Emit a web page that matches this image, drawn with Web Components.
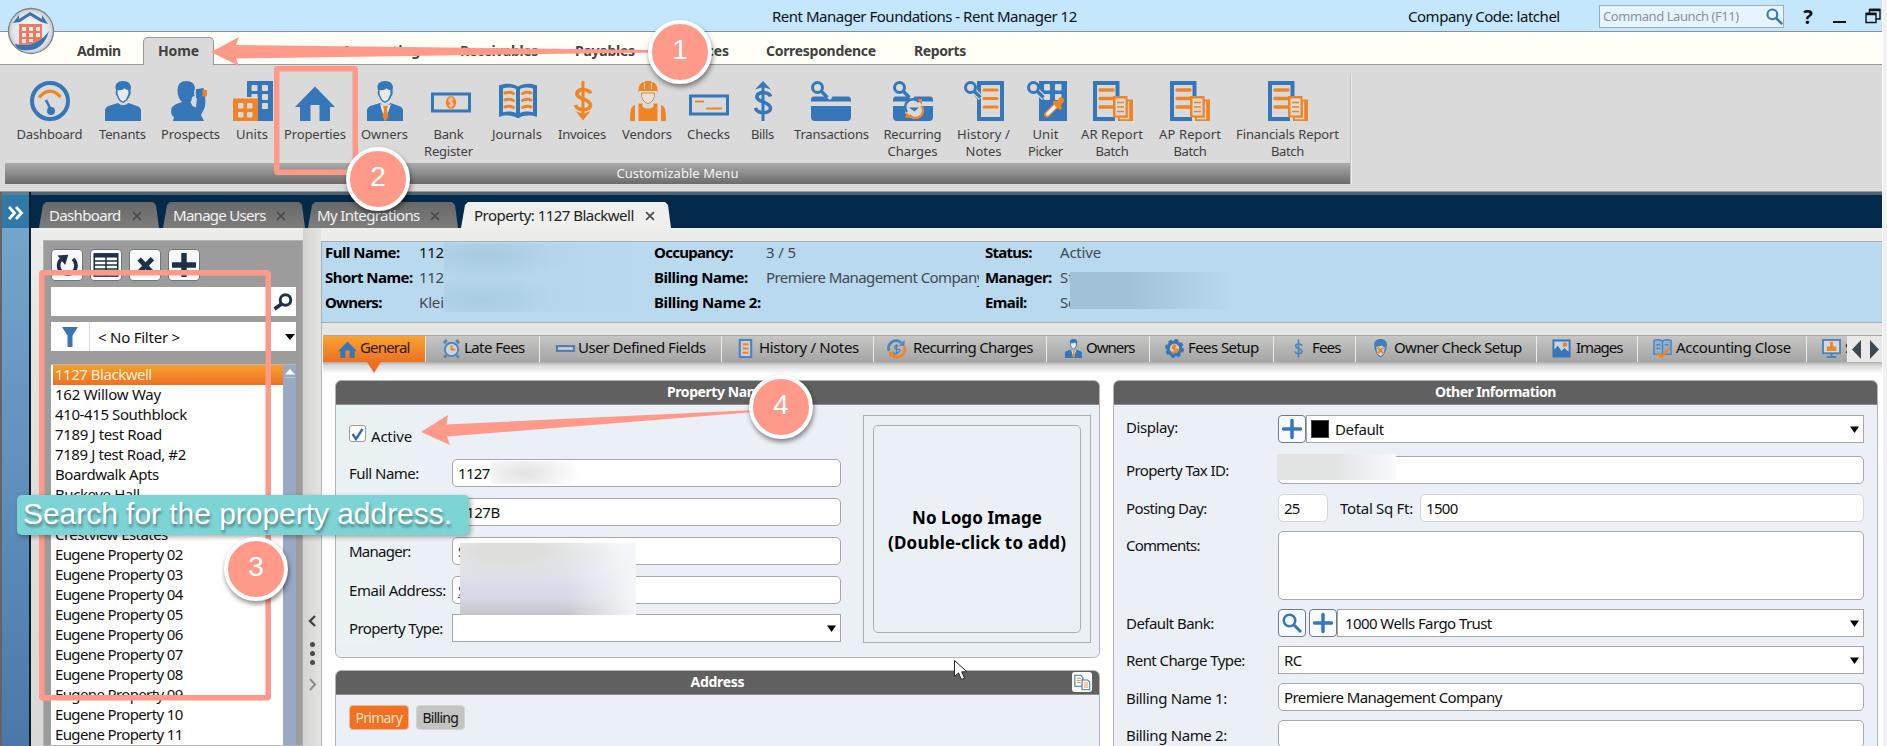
<!DOCTYPE html>
<html lang="en">
<head>
<meta charset="utf-8">
<title>Rent Manager 12</title>
<style>
html,body{margin:0;height:100%}
body{width:1887px;height:746px;overflow:hidden;background:#f1f1f1;font-family:"Noto Sans","Open Sans",sans-serif;font-size:15px;color:#111}
</style>
</head>
<body>
<rm-app></rm-app>
<script>
const define = (name, render, after) => customElements.define(name, class extends HTMLElement {
  connectedCallback() {
    if (this.shadowRoot) return;
    this.attachShadow({mode: 'open'}).innerHTML = render(this);
    if (after) after(this);
  }
});
const B = '#3577b8', O = '#f08424', G = '#dadada';

/* Text run whose tracking is adjusted to fill the width given in "w". */
define('rm-text', () => `<style>:host{display:block;white-space:nowrap;flex:none}span{display:inline-block;white-space:pre}</style><span><slot></slot></span>`, el => {
  const w = +el.getAttribute('w');
  if (!w) return;
  const s = el.shadowRoot.querySelector('span');
  const n = el.textContent.length;
  s.style.letterSpacing = ((w - s.getBoundingClientRect().width) / Math.max(1, n - .5)).toFixed(3) + 'px';
  el.style.width = w + 'px';
});
const T = (t, w, st = '') => `<rm-text w="${w}" style="${st}">${t}</rm-text>`;

const lens = c => `<circle cx="6.500" cy="6.500" r="5" fill="none" stroke="${c}" stroke-width="3"/><path d="M10 10l6.500 6.500" stroke="${c}" stroke-width="3.200"/>`;
const report = `<path d="M0 0h26.500v16h-4V4H4v32h18v4H0z" fill="${B}"/><path d="M7 9h13M7 17.500h13M7 26h13" stroke="${O}" stroke-width="3.400" stroke-linecap="round"/>
<path d="M20 15h14.500v3.500H40V40H25v-3.500h-5z" fill="${O}"/><path d="M35.500 20.500v17H27" fill="none" stroke="${G}" stroke-width="1.300"/><path d="M22.500 17.500h10v17h-10z" fill="${G}"/><path d="M24 21.500h7M24 26h7M24 30.500h7" stroke="${O}" stroke-width="1.700"/>`;
const book = `<path d="M1 4.500C7 2 14 2 20 5.500 26 2 33 2 39 4.500V36c-6-2-13-2-18 1h-2c-5-3-12-3-18-1z" fill="${B}"/><path d="M5 7.500c4-1.500 9-1.500 13 .5v24c-4-1.800-9-1.800-13-.7zM35 7.500c-4-1.500-9-1.500-13 .5v24c4-1.800 9-1.800 13-.7z" fill="${G}"/>
<g fill="none" stroke="${O}" stroke-width="3" stroke-linecap="round"><path d="M7 12q4-1.500 8.500.5M7 19q4-1.500 8.500.5M7 26q4-1.500 8.500.5M33 12q-4-1.500-8.500.5M33 19q-4-1.500-8.500.5M33 26q-4-1.500-8.500.5"/></g>`;
const head = `<path d="M13 9C11 3 15 0 20 0s9.500 3 7.500 9.500q.8 4-1 5.500Q25 20 20 22q-5-2-6-7-2-1.500-1-6z" fill="${B}"/><path d="M14.500 9q5 .8 7-1.700 1.500 2 3.800 1.700.7 4-.8 6-1 4-4.500 5.500-3.500-1.500-4.500-5.500-1.400-2-1-6z" fill="#e6e9ed"/>`;
const dollar = c => `<g fill="none" stroke="${c}" stroke-width="3.600"><path d="M27.500 12.500c-1-4.500-12-5.500-13.500-.5-1.500 6 13 5.500 13.500 12 .3 6-13.500 6.500-15 0"/></g>`;
const card = `<path d="M0 19q0-3.500 3-3.500h12l3 3h2l1.500-3H37q3 0 3 3.500v1.500H0zM0 25h40v11q0 4-4 4H4q-4 0-4-4z" fill="${B}"/>`;
const ICONS = {
  dashboard: `<circle cx="20" cy="20" r="18" fill="none" stroke="${B}" stroke-width="4"/><path d="M9 16.500q11-12.500 21.500-.5" fill="none" stroke="${O}" stroke-width="3.200"/><path d="M16 19l5 10" stroke="${B}" stroke-width="2.600"/><circle cx="21" cy="30" r="4" fill="${B}"/>`,
  tenant: head + `<path d="M2 40V29q1-4 5-4.500L15 22q5 4.500 10.500 0l7 2.500q5 1 5.500 4.500v11z" fill="${B}"/>`,
  owner: head + `<path d="M2 40V29q1-4 5-4.500L15 22l5 4.500L25.500 22l7 2.500q5 1 5.500 4.500v11z" fill="${B}"/><path d="M15 23l5 17 6-17-5.500 2.500z" fill="#e6e9ed"/><path d="M18 25h5l-1 4 1.500 7-3 4-3-4L19 29z" fill="${O}"/>`,
  prospect: `<path d="M6.500 9Q6.500 0 15.500 0 23 0 24 7l-1 4 .5 4-2.500 1-.5 3.500-1 1.500 2 4 3.500 1.500 1-10.500-1.500-4 2-4 6-1 1.500 8q1 8-.5 12l-3.500 7 3 6H2l1-4q-4-2-2.500-9Q3 23 11 21q-4.500-4-4.500-12z" fill="${B}"/><path d="M31 9h5v6.500h-5z" fill="${O}"/><path d="M25 8h6.500v9H25z" fill="${B}"/>`,
  units: `<path d="M14 0h26v40H25V16H14z" fill="${B}"/><g fill="${G}"><rect x="18.500" y="4" width="6" height="6" rx="1"/><rect x="29" y="4" width="6" height="6" rx="1"/><rect x="29" y="13" width="6" height="6" rx="1"/><rect x="29" y="22" width="6" height="6" rx="1"/><rect x="18.500" y="13" width="6" height="4"/></g><path d="M0 17.500h25V40H0z" fill="${O}"/><g fill="${G}"><rect x="5" y="22" width="5.500" height="5.500" rx="1"/><rect x="14" y="22" width="5.500" height="5.500" rx="1"/><rect x="5" y="31" width="5.500" height="5.500" rx="1"/><rect x="14" y="31" width="5.500" height="5.500" rx="1"/></g>`,
  house: `<path d="M20 5.500L40 26h-5v14H24.500V24h-9v16H5V26H0z" fill="${B}"/>`,
  bank: `<rect x="1.500" y="13" width="37" height="17" fill="none" stroke="${B}" stroke-width="3"/><ellipse cx="20" cy="21.500" rx="5.200" ry="6.500" fill="${O}"/><path d="M22 19q-2-2-3.800-.8-1 2 1.800 3t1.700 3Q19.500 25.500 18 24M20 16v11" stroke="${G}" fill="none" stroke-width="1.200"/>`,
  book,
  invoice: dollar(O) + `<path d="M20 0v33" stroke="${O}" stroke-width="3"/><path d="M12.500 30l7.500 3 7.500-3-7.500 9.500z" fill="${O}"/>`,
  bill: `<g transform="translate(0 3)">${dollar(B)}</g><path d="M20 6v34" stroke="${B}" stroke-width="3"/><path d="M12 8.500L20 0l8 8.500-8-2.500z" fill="${B}"/>`,
  vendor: `<path d="M10.500 9Q11 1 17 1V0h6v1q6 0 6.500 8l.5 2H10z" fill="${O}"/><path d="M16.500 2v6M23.500 2v6M11 10.500h18" stroke="${G}" stroke-width="1"/><path d="M13.500 12h13q.5 8-6.500 11-7-3-6.500-11z" fill="#e2e2e2" stroke="${O}" stroke-width="1"/><path d="M2 40q0-12 2-14 1-1.500 3-2v16zM38 40q0-12-2-14-1-1.500-3-2v16zM10.500 22.500h4V26q5.500 3 11 0v-3.500h4V40h-19z" fill="${O}"/>`,
  check: `<rect x="1.500" y="15" width="37" height="18" fill="none" stroke="${B}" stroke-width="3"/><path d="M6 20.500h9M17 27.500h16" stroke="${O}" stroke-width="2.200"/>`,
  trans: card + lens(B),
  recurring: card + lens(B) + `<circle cx="21" cy="28" r="9.500" fill="${G}"/><path d="M14 31a7.500 7.500 0 0112-10" fill="none" stroke="${B}" stroke-width="2.400"/><path d="M28.500 25a7.500 7.500 0 01-12 9" fill="none" stroke="${O}" stroke-width="2.400"/><path d="M16 26.500h10l-4.500 4z" fill="${B}"/><path d="M24 18h5v6zM18 37l-6-.5 2-5z" fill="${O}"/>`,
  history: `<path d="M13 0h27v40H13V18l-3-4 3-2z" fill="${B}"/><path d="M17 4h19v32H17z" fill="${G}"/><path d="M20 9h13M20 17.500h13M20 26h13" stroke="${O}" stroke-width="3.200" stroke-linecap="round"/><path d="M10 10l7 7" stroke="${G}" stroke-width="6"/>` + lens(B),
  picker: `<path d="M12 0h28v40H12z" fill="${B}"/><g fill="${G}"><rect x="17" y="3" width="6" height="6.500" rx="1"/><rect x="28" y="3" width="6.500" height="6.500" rx="1"/><rect x="17" y="13" width="6" height="6" rx="1"/><rect x="28" y="13" width="6.500" height="6" rx="1"/></g><path d="M10 10l7 7" stroke="${G}" stroke-width="6"/>${lens(B)}<path d="M20 33.500L29 24.500" stroke="${O}" stroke-width="6" stroke-linecap="round"/><path d="M20.500 33L28.500 25" stroke="#eee" stroke-width="3.500" stroke-linecap="round"/><path d="M28 21.500l5 5" stroke="${O}" stroke-width="4" stroke-linecap="round"/><path d="M31 23.500l3-4" stroke="${O}" stroke-width="6" stroke-linecap="round"/>`,
  report,
  clock: `<circle cx="20" cy="22" r="14" fill="#cdd4da" stroke="#4a86bf" stroke-width="4"/><path d="M4 9l6-7M36 9l-6-7M9 34l-4 5M31 34l4 5" stroke="#4a86bf" stroke-width="6"/><path d="M20 13v9h8" stroke="${O}" stroke-width="4" fill="none"/>`,
  field: `<rect x="2" y="15" width="36" height="10" fill="#cfcfcf" stroke="#4a7fb0" stroke-width="4.500"/>`,
  note: `<rect x="8" y="2" width="24" height="36" fill="#cfcfcf" stroke="#4a86bf" stroke-width="4.500"/><path d="M14 11h12M14 20h12M14 29h12" stroke="${O}" stroke-width="4.500"/>`,
  cycle: `<path d="M4 25A16 16 0 0130 8" fill="none" stroke="#4a86bf" stroke-width="6"/><path d="M36 15A16 16 0 0110 33" fill="none" stroke="${O}" stroke-width="6"/><path d="M15 27H4l2 12z" fill="${O}"/><path d="M25 14h12V2z" fill="#4a86bf"/><path d="M24 15q-8-3-8 2t8 5-1 7-8-2M20 11v19" fill="none" stroke="#4a7fb0" stroke-width="2.500"/>`,
  gear: `<circle cx="20" cy="20" r="13.500" fill="#d8cfc4" stroke="#3577b8" stroke-width="7"/><circle cx="20" cy="20" r="18" fill="none" stroke="#3577b8" stroke-width="4" stroke-dasharray="8 6.100"/><path d="M24 15q-8-3-8 2t8 5-1 5-8-1M20 10v20" fill="none" stroke="${O}" stroke-width="3.500"/>`,
  dollar: `<g transform="translate(0 2)">${dollar('#4a86bf')}</g><path d="M20 1v38" stroke="#4a86bf" stroke-width="3.500"/>`,
  face: `<path d="M7 16C5 5 12 0 20 0s16 5 13 17q0 6-3 10-4 10-10 12-6-2-10-12-3-5-3-11z" fill="#3f7fbd"/><path d="M11 17l12-3 6 4-2 12-7 7-7-7z" fill="#d4d0ca"/><path d="M14 18l12 12M26 18L14 30" stroke="${O}" stroke-width="4"/>`,
  image: `<rect x="1" y="1" width="38" height="38" fill="#3577b8"/><path d="M5 5h30v22l-9-8-6 6-8-11-7 8z" fill="#c8d4df"/><circle cx="27" cy="12" r="5" fill="${O}"/>`,
  ledger: `<path d="M2 3q9-3 18 1 9-4 18-1v29H2z" fill="#8fb0cf" stroke="#4a86bf" stroke-width="3"/><path d="M20 4v28M7 12h8M7 20h8M25 12h8" stroke="#4a86bf" stroke-width="3"/><path d="M10 29l8 8 16-18" fill="none" stroke="${O}" stroke-width="5.500"/>`,
  monitor: `<rect x="2" y="2" width="36" height="28" fill="#d5d8da" stroke="#4a86bf" stroke-width="4"/><path d="M20 30v8M10 38h20" stroke="#4a86bf" stroke-width="4.500"/><path d="M17 6h6v10h7v9H10v-9h7z" fill="${O}"/>`,
  search: `<circle cx="15" cy="15" r="11.500" fill="none" stroke="#3577b8" stroke-width="5"/><path d="M23 23l15 15" stroke="#3577b8" stroke-width="6"/>`,
  plus: `<path d="M20 3v34M3 20h34" stroke="#3577b8" stroke-width="7" stroke-linecap="round"/>`,
  refresh: `<path d="M30 10a14.500 14.500 0 11-20 1" fill="none" stroke="#1d3247" stroke-width="6"/><path d="M4 4l18-1-5 17z" fill="#1d3247"/>`,
  table: `<rect x="2" y="3" width="36" height="34" fill="#fff" stroke="#1d3247" stroke-width="2.500"/><path d="M2 5.500h36" stroke="#1d3247" stroke-width="6"/><path d="M2 14h36M2 20h36M2 26h36M2 32h36M20 5v32" stroke="#1d3247" stroke-width="2.300"/>`,
  cross: `<path d="M9 9l23 24M32 8L8 33" stroke="#1d3247" stroke-width="8.500"/>`,
  add: `<path d="M20 0v40M0 20h40" stroke="#1d3247" stroke-width="9"/>`,
  copy: `<path d="M2 3h14l5 5v21H2z" fill="#fff" stroke="#3577b8" stroke-width="2.500"/><path d="M6 10h10M6 15h10M6 20h10" stroke="${O}" stroke-width="2"/><path d="M19 14h13l5 5v18H19z" fill="#fff" stroke="#3577b8" stroke-width="2.500"/><path d="M23 21h10M23 26h10M23 31h10" stroke="${O}" stroke-width="2"/>`
};
define('rm-icon', el => {
  const s = el.getAttribute('s') || 40;
  return `<style>:host{display:block;flex:none;width:${s}px;height:${s}px}svg{display:block;overflow:visible}</style><svg width="${s}" height="${s}" viewBox="0 0 40 40">${ICONS[el.getAttribute('name')]}</svg>`;
});

define('rm-titlebar', () => `<style>
:host{display:flex;align-items:center;background:#c4e7fd;border-bottom:1px solid #84929c;color:#0c1016;box-sizing:border-box;height:32px;flex:none}
.find{display:flex;align-items:center;width:184px;height:21px;margin-left:39px;border:1px solid #96aebc;background:#e6f4fd;color:#8a9299;font-size:13px;box-sizing:content-box;margin-bottom:-1px}
.q{width:12px;margin-left:19px;font:bold 20px/28px "Noto Sans";margin-top:3px}
.min{width:13px;height:2px;background:#111;margin:13px 0 0 18px}
svg{margin-left:19px}
</style>${T('Rent Manager Foundations - Rent Manager 12',305,'margin-left:772px')}${T('Company Code: latchel',152,'margin-left:331px')}
<div class="find">${T('Command Launch (F11)',136,'margin:0 27px 0 3px')}<rm-icon name="search" s="17"></rm-icon></div><span class="q">?</span><div class="min"></div>
<svg width="17" height="16" fill="none" stroke="#111" stroke-width="1.400"><path d="M1 5.500h10v9H1zM4.500 5V1.500H15V11h-3.500"/><path d="M1 6h10M4.500 2H15" stroke-width="2.400"/></svg>`);

define('rm-menubar', () => {
  const items = [['Accounting',342,78],['Receivables',460,78],['Payables',575,60],['Services',672,57],['Correspondence',766,110],['Reports',914,52]];
  let x = 214, h = '';
  for (const [t, s, w] of items) { h += T(t, w, `margin-left:${s - x}px`); x = s + w; }
  return `<style>:host{display:flex;box-sizing:border-box;height:33px;border-bottom:1px solid #999;background:#fffef7;font-weight:700;font-size:14px;line-height:37px;color:#414141;flex:none}
.home{box-sizing:border-box;width:71px;height:28px;margin:5px 0 -1px 22px;padding-left:14px;border:1px solid #999;border-bottom:0;border-radius:5px 5px 0 0;background:#dadada;line-height:26px}</style>
${T('Admin',44,'margin-left:77px')}<div class="home">${T('Home',41)}</div>${h}`;
});

define('rm-ribbon', () => {
  const items = [
    [49.5,50,'dashboard',['Dashboard',66]],[122.5,123,'tenant',['Tenants',47]],[190.5,191,'prospect',['Prospects',59]],[252,253,'units',['Units',32]],
    [315,315,'house',['Properties',62]],[384.5,385,'owner',['Owners',47]],[448.5,451,'bank',['Bank',30],['Register',49]],[517,518,'book',['Journals',50]],
    [582,583,'invoice',['Invoices',48]],[647,648,'vendor',['Vendors',50]],[708.5,709,'check',['Checks',43]],[762.5,763,'bill',['Bills',23]],
    [831.5,831,'trans',['Transactions',75]],[912.5,913,'recurring',['Recurring',58],['Charges',50]],[983.5,984,'history',['History /',53],['Notes',36]],
    [1045.5,1047,'picker',['Unit',26],['Picker',35]],[1112,1113,'report',['AR Report',62],['Batch',33]],[1190,1190,'report',['AP Report',62],['Batch',33]],
    [1287.5,1288,'report',['Financials Report',103],['Batch',33]]];
  let x = 0, h = '';
  for (const [c, ic, n, ...ls] of items) {
    const w = Math.max(...ls.map(l => l[1]));
    h += `<div class="i" style="width:${w}px;margin-left:${c - w / 2 - x}px"><rm-icon name="${n}" style="margin-left:${(ic - c) * 2}px"></rm-icon>${ls.map(l => T(l[0], l[1])).join('')}</div>`;
    x = c + w / 2;
  }
  return `<style>:host{display:block;box-sizing:border-box;height:127px;background:#dadada;border-bottom:1px solid #989898;flex:none;font-size:13px;line-height:17px;color:#3f3f3f}
.items{display:flex;height:98px;box-sizing:border-box;padding-top:16px}
.i{display:flex;flex-direction:column;align-items:center;flex:none}.i rm-icon{margin-bottom:5px}
.bar{width:1345px;height:21px;margin-left:5px;background:linear-gradient(#ababab,#6b6b6b);color:#f4f4f4;display:flex;justify-content:center;line-height:20px}
.g{width:1351px;position:relative}.g::after{content:"";position:absolute;right:0;top:8px;bottom:0;width:1px;background:#c0c0c0;box-shadow:1px 0 #eee}</style><div class="g"><div class="items">${h}</div><div class="bar">${T('Customizable Menu',122)}</div></div>`;
});

define('rm-doctabs', () => {
  const x = '<svg width="10" height="10" viewBox="0 0 9 9"><path d="M1 1l7 7M8 1L1 8" stroke="currentColor" stroke-width="1.600"/></svg>';
  const tab = (t, w, tw, ml, tl, gap, cls = '') => `<div class="t ${cls}" style="width:${w}px;margin-left:${ml}px">${T(t, tw, `margin-left:${tl}px`)}<i style="margin-left:${gap}px">${x}</i></div>`;
  return `<style>:host{display:flex;align-items:flex-end;box-sizing:border-box;height:36px;background:#032a4b;border-top:3px solid #4d6375;flex:none}
.t{display:flex;align-items:center;height:26px;flex:none;color:#f2f2f2;background:linear-gradient(#686868,#7d7d7d);clip-path:polygon(0 100%,4px 3px,7px 0,calc(100% - 6px) 0,calc(100% - 3px) 3px,100% 100%)}
.t.on{background:#efefed;color:#222}i{color:#474d50;line-height:0;margin-top:2px}</style>
${tab('Dashboard',120,72,8,10,11)}${tab('Manage Users',142,93,4,10,10)}${tab('My Integrations',150,103,3,9,10)}${tab('Property: 1127 Blackwell',210,160,3,13,11,'on')}`;
});

define('rm-sidebar', () => {
  const rows = [['1127 Blackwell',97],['162 Willow Way',106],['410-415 Southblock',132],['7189 J test Road',107],['7189 J test Road, #2',131],['Boardwalk Apts',104],['Buckeye Hall',85],['Clearview Apts',98],['Crestview Estates',113]]
    .concat(['02','03','04','05','06','07','08','09','10','11'].map(n => ['Eugene Property ' + n, 128]));
  return `<style>:host{display:block;box-sizing:border-box;width:260px;height:506px;margin:12px 0 0 12px;padding:8px 8px 0 7px;background:#9c9c9c;border:1px solid #b4b4b4;border-right-color:#aaa;flex:none;overflow:hidden}
.tools{display:flex;gap:7px;margin-bottom:6px}.b{box-sizing:border-box;width:32px;height:32px;border:1px solid #6d7778;border-radius:4px;background:#f8f9fa;display:flex;align-items:center;justify-content:center;box-shadow:inset 0 0 0 1px #fff}
.box{display:flex;align-items:center;height:29px;background:#fff;margin-bottom:6px;width:245px}
.fn{width:38px;height:29px;display:flex;justify-content:center;align-items:center;border-right:1px solid #d5dbe0}
.list{display:flex;width:245px;height:390px;margin-top:13px;background:#fff;border-top:1px solid #bdb3a8}
ul{list-style:none;margin:0;padding:0 0 0 2px;flex:1}li{height:20px;line-height:19px;padding-left:2px}.on{background:linear-gradient(#f6a02e,#ee7122);color:#fdf0d5}
.sb{width:13px;background:#9aa9c3;display:flex;justify-content:center;padding-top:4px;box-sizing:border-box}</style>
<div class="tools">${[['refresh',24],['table',26],['cross',23],['add',24]].map(([n, s]) => `<div class="b"><rm-icon name="${n}" s="${s}"></rm-icon></div>`).join('')}</div>
<div class="box"><svg style="margin-left:222px" width="20" height="18" fill="none" stroke="#1d3247"><circle cx="12.500" cy="7" r="5.300" stroke-width="3"/><path d="M8.500 11L1.500 16" stroke-width="3.800"/></svg></div>
<div class="box"><div class="fn"><svg width="18" height="22" fill="#3a75b2"><path d="M1 1h16l-5.500 8.500V21h-5V9.500z"/></svg></div>${T('&lt; No Filter &gt;',82,'margin-left:8px')}<svg style="margin-left:105px" width="10" height="6"><path d="M0 0h10L5 6z"/></svg></div>
<div class="list"><ul>${rows.map(([t, w], i) => `<li class="${i ? '' : 'on'}">${T(t, w)}</li>`).join('')}</ul><div class="sb"><svg width="10" height="9"><path d="M0 5.500L5 0l5 5.500z" fill="#fff"/><path d="M0 8.500h10" stroke="#b8c3d6"/></svg></div></div>`;
});

define('rm-splitter', () => `<style>:host{display:flex;flex-direction:column;align-items:center;width:18px;flex:none;box-sizing:border-box;padding:387px 0 0;background:linear-gradient(90deg,#d4d4d3,#e3e3e2)}i{width:5px;height:5px;border-radius:50%;background:#4a4a4a;margin-bottom:4px}</style>
<svg width="9" height="12" fill="none" stroke="#444" stroke-width="2.400"><path d="M7 1L2 6l5 5"/></svg><div style="height:15px"></div><i></i><i></i><i></i><svg style="margin-top:9px" width="9" height="13" fill="none" stroke="#8d8d8d" stroke-width="2"><path d="M2 1l5 5.500L2 12"/></svg>`);

define('rm-summary', () => {
  const k = (t, w) => `<b>${T(t, w)}</b>`, v = (t, w) => `<span>${w ? T(t, w) : ''}</span>`;
  return `<style>:host{display:block;position:relative;box-sizing:border-box;height:82px;background:#b9d9ee;border:1px solid #a6b0b3;border-right:0;flex:none}
.g{display:grid;grid-template-columns:94px 235px 112px 219px 75px 300px;grid-auto-rows:25px;line-height:25px;padding-left:3px;margin-top:-2px;color:#000}
span{color:#3f4a52;overflow:hidden}.clip{width:213px}
.z{position:absolute}</style>
<div class="g">${k('Full Name:',75)}<span style="color:#111">${T('1127',33)}</span>${k('Occupancy:',79)}${v('3 / 5',30)}${k('Status:',47)}${v('Active',41)}
${k('Short Name:',88)}${v('1127',33)}${k('Billing Name:',94)}<span class="clip">${T('Premiere Management Company',218)}</span>${k('Manager:',67)}${v('St',14)}
${k('Owners:',57)}${v('Klei',25)}${k('Billing Name 2:',107)}${v('')}${k('Email:',42)}${v('Sc',15)}</div>
<div class="z" style="left:122px;top:1px;width:190px;height:69px;background:radial-gradient(ellipse 90px 24px at 42px 12px,#a8cae0,#b9d9ee00),radial-gradient(ellipse 85px 24px at 38px 56px,#aacce2,#b9d9ee00),#b5d6eb;-webkit-mask:linear-gradient(90deg,#000 40%,transparent)"></div>
<div class="z" style="left:748px;top:30px;width:165px;height:37px;background:linear-gradient(90deg,#a1c1d8 35%,#b9d9ee)"></div>`;
});

define('rm-sectiontabs', () => {
  const d = [[323,426,338,'house','General',360,50],[426,540,442,'clock','Late Fees',464,61],[540,721.5,556,'field','User Defined Fields',578,128],[721.5,874,736,'note','History / Notes',759,100],
    [874,1047,887,'cycle','Recurring Charges',913,120],[1047,1149.5,1064,'owner','Owners',1086,49],[1149.5,1274,1165,'gear','Fees Setup',1188,71],[1274,1356,1289,'dollar','Fees',1312,29],
    [1356,1537,1371,'face','Owner Check Setup',1394,128],[1537,1638,1552,'image','Images',1576,47],[1638,1806.5,1653,'ledger','Accounting Close',1676,115],[1806.5,1848,1822,'monitor','S',1845,9]];
  return `<style>:host{display:block;margin-top:12px;flex:none;background:linear-gradient(#a2a2a2,#d9d9d9 35%,#fff) 0 26px/100% 13px no-repeat;height:45px}
.r{display:flex;height:26px;border-top:1px solid #a8a8a8;background:linear-gradient(#c6c6c5,#a3a4a3);line-height:23px}
.t{box-sizing:border-box;display:flex;align-items:center;border-right:1px solid #ececec;overflow:hidden;flex:none;color:#0d0d0d}
.t rm-text{height:26px}
.on{background:linear-gradient(#f8a331,#ee7022);color:#2c1c0c}
.n{flex:1;background:#e9e9e9;display:flex;gap:9px;align-items:center;justify-content:center}
.p{display:block;margin-left:44px}</style>
<div class="r">${d.map(([a, b, ix, n, t, tx, tw], i) => `<div class="t ${i ? '' : 'on'}" style="width:${b - a}px"><rm-icon name="${n}" s="19" style="margin-left:${ix - a}px;margin-top:-1px"></rm-icon>${T(t, tw, `margin-left:${tx - ix - 19}px`)}</div>`).join('')}<div class="n"><svg width="9" height="19"><path d="M9 0v19L0 9.500z" fill="#3d4a4d"/></svg><svg width="9" height="19"><path d="M0 0v19l9-9.500z" fill="#3d4a4d"/></svg></div></div>
<svg class="p" width="14" height="11"><path d="M0 0h14L7 11z" fill="#ee7022"/></svg>`;
});

define('rm-card', el => `<style>:host{display:block;box-sizing:border-box;border:1px solid #b3b5b5;border-radius:6px;background:#ebf0f7;overflow:hidden}
h2{margin:-1px -1px 0;height:25px;box-sizing:border-box;background:#606060;color:#fff;font-size:14px;line-height:24px;display:flex;justify-content:center;border-bottom:1px solid #928d90;position:relative}
::slotted([slot=tool]){position:absolute;right:8px;top:2px}</style><h2>${T(el.getAttribute('label'), el.getAttribute('lw'))}<slot name="tool"></slot></h2><slot></slot>`);

/* Input or drop-down box; "kind" is input, select or soft. */
define('rm-field', el => {
  const k = el.getAttribute('kind');
  return `<style>:host{display:flex;align-items:center;box-sizing:border-box;height:28px;background:#fff;border:1px solid ${k === 'soft' ? '#d0d7d8' : '#a3a8a9'};border-radius:${k === 'select' ? 0 : 5}px;padding-left:5px;flex:none;overflow:hidden}
svg{margin:0 4px 0 auto}</style><slot></slot>${k === 'select' ? '<svg width="9" height="7"><path d="M0 .5h9L4.500 7z"/></svg>' : ''}`;
});
define('rm-button', el => `<style>:host{display:flex;align-items:center;justify-content:center;box-sizing:border-box;width:28px;height:28px;border:1.500px solid #6c7d82;border-radius:4px;background:#f8fbfd;flex:none}</style><rm-icon name="${el.getAttribute('icon')}" s="20"></rm-icon>`);

define('rm-general', () => {
  const row = (l, w, c, mt = 11, h = 28, ls = '') => `<div class="row" style="margin-top:${mt}px;height:${h}px">${T(l, w, ls)}<div class="c">${c}</div></div>`;
  const f = (w, t = '', k = 'input') => `<rm-field kind="${k}" style="width:${w}px">${t}</rm-field>`;
  return `<style>:host{display:flex;flex:1;gap:13px;padding:0 4px 0 12px;background:#fff}
.l{width:765px;display:flex;flex-direction:column;gap:12px;flex:none}
.one{height:278px;flex:none}.two{height:90px;border-radius:6px 6px 0 0}.right{flex:1;height:380px}
.body{display:flex;background:linear-gradient(90deg,#eaf3f3,#ebf0f7 15%)}
.form{width:506px;margin-left:13px}
.row{display:flex;align-items:center;position:relative}.form .c{position:absolute;left:103px;display:flex}
.chk{display:flex;align-items:center;margin-top:18px;height:25px}
.chk div{width:15px;height:15px;border:1px solid #999;border-radius:3px;background:#fff;margin:-4px 5px 0 0}
.logo{border:1px solid #aab0ae;margin-top:10px;margin-left:8px;display:flex;padding:9px;box-sizing:border-box;width:228px;height:228px}
.logo>div{flex:1;border:1px solid #aab0ae;border-radius:5px;display:flex;flex-direction:column;align-items:center;justify-content:center;font-weight:700;font-size:17px;line-height:25px;color:#000;padding-top:2px}
.btns{display:flex;gap:7px;margin:10px 13px}.btns div{box-sizing:border-box;height:25px;border-radius:4px;display:flex;align-items:center;justify-content:center;font-size:14px}
.o{width:60px;background:#f27024;color:#fde3bf;border:1px solid #f7b78c}.g{width:49px;background:#c3c3c1;border:1px solid #d3d3d0}
.rf{padding:0 14px 0 12px}.rf .c{position:absolute;left:152px;display:flex;align-items:center}
.sw{width:16px;height:16px;background:#000;border:1px solid #444;margin:0 6px 0 -1px}
.copy{width:20px;height:20px;border-radius:3px;background:#fff;display:flex;align-items:center;justify-content:center}
.z{position:absolute}</style>
<div class="l"><rm-card class="one" label="Property Name" lw="101"><div class="body"><div class="form">
<div class="chk"><div><svg width="15" height="15"><path d="M2.500 7l3.500 5L12.500 2" fill="none" stroke="#2f6ea5" stroke-width="2.400"/></svg></div>${T('Active',41)}</div>
${row('Full Name:',70,f(389,T('1127',32)) + '<div class="z" style="left:39px;top:2px;width:92px;height:23px;background:radial-gradient(ellipse 56px 26px at 34px 12px,#e2e2e2,#fff)"></div>')}
${row('Short Name:',80,f(389,T('1127B',42)))}
${row('Manager:',62,f(389,T('St',14)))}
${row('Email Address:',97,f(389,T('<u style="color:#4a1bb0">St</u>',14)))}
${row('Property Type:',94,f(389,'','select'),10)}
</div><div class="logo"><div>${T('No Logo Image',130)}${T('(Double-click to add)',178)}</div></div></div></rm-card>
<rm-card class="two" label="Address" lw="54"><div slot="tool" class="copy"><rm-icon name="copy" s="17"></rm-icon></div><div class="btns"><div class="o">${T('Primary',47)}</div><div class="g">${T('Billing',36)}</div></div></rm-card></div>
<rm-card class="right" label="Other Information" lw="121"><div class="rf">
${row('Display:',52,'<rm-button icon="plus"></rm-button>' + f(558,`<div class="sw"></div>${T('Default',49)}`,'select'),10,28,'margin-top:-4px')}
${row('Property Tax ID:',103,f(586),13)}
${row('Posting Day:',81,f(50,T('25',16),'soft') + T('Total Sq Ft:',73,'margin:0 7px 0 12px') + f(444,T('1500',32),'soft'),10)}
${row('Comments:',74,'<rm-field kind="input" style="width:586px;height:69px;margin-top:41px"></rm-field>',9)}
${row('Default Bank:',88,'<rm-button icon="search" style="margin-right:3px"></rm-button><rm-button icon="plus"></rm-button>' + f(527,T('1000 Wells Fargo Trust',147,'margin-left:2px'),'select'),50)}
${row('Rent Charge Type:',119,f(586,T('RC',18),'select'),9)}
${row('Billing Name 1:',101,f(586,T('Premiere Management Company',218)),9,28,'margin-top:2px')}
${row('Billing Name 2:',101,f(586),9,28,'margin-top:2px')}
</div></rm-card>`;
});

define('rm-badge', () => `<style>:host{position:absolute;box-sizing:border-box;width:64px;height:64px;border:4px solid #fff;border-radius:50%;background:#ff9a8b;box-shadow:1px 3px 5px #0007;color:#fff;font:28px/52px "Liberation Sans",sans-serif;text-align:center}</style><slot></slot>`);
define('rm-annotations', () => `<style>:host{position:absolute;inset:0;pointer-events:none}
svg{position:absolute;left:0;top:0}
.tip{position:absolute;left:17px;top:495px;width:452px;height:40px;border-radius:5px;background:#7cd4d5;box-shadow:2px 2px 5px #0005;color:#fff;font:30px/38px "Liberation Sans",sans-serif;text-shadow:1px 3px 3px #0006}
.z{position:absolute}</style>
<svg style="left:7px;top:7px" width="48" height="48"><defs><radialGradient id="lg"><stop offset="0" stop-color="#fff"/><stop offset=".8" stop-color="#e0e4e8"/><stop offset="1" stop-color="#c5c9cc"/></radialGradient></defs><circle cx="24" cy="24" r="22.500" fill="url(#lg)" stroke="#7d8488" stroke-width="1.300"/><path d="M6 16L12 8v4l11-7 12 7V8l6 9-7-2-11-6.500L13 15z" fill="#3b73ae"/><path d="M12 17h23v17q-8 4-23 4z" fill="#e97c66"/><g fill="#fbe4dc"><path d="M15 20h4v4h-4zM22 20h4v4h-4zM29 20h4v4h-4zM15 26h4v4h-4zM22 26h4v4h-4zM29 26h4v4h-4zM15 32h4v4h-4zM22 32h4v3h-4z"/></g><path d="M8 37q21 5 34-13-6 22-27 19-6-1-7-6z" fill="#3b73ae"/></svg>
<div class="z" style="left:460px;top:543px;width:176px;height:72px;background:radial-gradient(ellipse 110px 36px at 50px 8px,#dedfdd 30%,transparent),linear-gradient(90deg,transparent 60%,#f5f6f8),linear-gradient(#f4f5f5,#d9dbec 60%,#d7d8e4 75%,#c3c5cb)"></div>
<div class="z" style="left:1277px;top:454px;width:119px;height:26px;background:linear-gradient(90deg,#e2e4e4 50%,#f9fafc)"></div>
<svg width="1887" height="746" fill="none"><g stroke="#ff9a8b" stroke-width="5.500"><rect x="276.750" y="68.750" width="78.500" height="103.500" rx="1"/><rect x="41.750" y="272.750" width="226.500" height="425" rx="1"/></g>
<g fill="#ff9a8b"><path d="M211 52l28-15-3 8L655 50v2.500L236 58.500l3 7.500z"/><path d="M421 432l27-17-1.500 9.500L755 410v2L447 436.500l3 8.500z"/></g>
<path d="M954.500 660.500v16l4-3.600 3 6.600 3-1.300-2.800-6.400h5.300z" fill="#fff" stroke="#222"/></svg>
<div class="tip">${T('Search for the property address.',429,'margin-left:6px')}</div>
<rm-badge style="left:648px;top:20px">1</rm-badge><rm-badge style="left:346px;top:147px">2</rm-badge><rm-badge style="left:224px;top:537px">3</rm-badge><rm-badge style="left:749px;top:375px">4</rm-badge>`);

define('rm-app', () => `<style>:host{display:flex;flex-direction:column;position:relative;width:1882px;height:746px;overflow:hidden;box-shadow:1px 0 #fff}
.work{display:flex;flex:1;min-height:0}
.rail{box-sizing:border-box;width:31px;border-left:2px solid #646464;border-right:2px solid #111c26;box-shadow:inset 0 3px #5d7f96;background:linear-gradient(#2f79a9 0 36px,#74a5cc 36px,#4a79a9);padding:12px 0 0 6px;flex:none}
.col{flex:1;display:flex;flex-direction:column;min-width:0}.body{display:flex;flex:1;min-height:0;background:linear-gradient(#ededeb,#e2e2e1 150px,#d8d8d7)}
.main{flex:1;margin-top:13px;display:flex;flex-direction:column;min-width:0}
.deck{display:flex;flex-direction:column;flex:1;padding-left:1px;border-left:1px solid #b5b5b5;background:linear-gradient(transparent 12px,#fff 12px)}</style>
<rm-titlebar></rm-titlebar><rm-menubar></rm-menubar><rm-ribbon></rm-ribbon>
<div class="work"><div class="rail"><svg width="16" height="14" fill="none" stroke="#fff" stroke-width="2.800"><path d="M1 1l5.500 6L1 13M8 1l5.500 6L8 13"/></svg></div>
<div class="col"><rm-doctabs></rm-doctabs><div class="body"><rm-sidebar></rm-sidebar><rm-splitter></rm-splitter><div class="main"><rm-summary></rm-summary><div class="deck"><rm-sectiontabs></rm-sectiontabs><rm-general></rm-general></div></div></div></div></div>
<rm-annotations></rm-annotations>`);
</script>
</body>
</html>
